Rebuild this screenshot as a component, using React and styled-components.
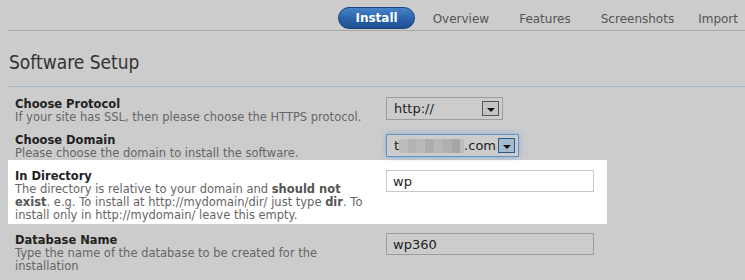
import React from "react";
import styled, {createGlobalStyle} from "styled-components";

const GlobalStyle = createGlobalStyle`
  html, body {
    margin: 0;
    padding: 0;
    background: #cccccc;
    font-family: "DejaVu Sans", Verdana, sans-serif;
  }
`

const Page = styled.div`
  width: 745px;
  height: 280px;
  overflow: hidden;
  padding-left: 8px;
  box-sizing: border-box;
`

const TabBar = styled.div`
  height: 29px;
  display: flex;
  align-items: flex-end;
  justify-content: flex-end;
  gap: 30px;
  padding: 0 7px 1px 0;
  border-bottom: 1px solid #a8a8a8;
`

const Tab = styled.div`
  font-size: 12px;
  line-height: 20px;
  color: #555;
  &:last-child {
    margin-left: -6px;
  }
  ${(p) => p.$active && `
    margin-right: -12px;
    height: 20px;
    padding: 0 16px;
    border-radius: 11px;
    border: 1px solid #1a437c;
    background: linear-gradient(#4683c9, #2a62a9 55%, #1d4f93);
    color: #fff;
    font-weight: bold;
  `}
`

const Title = styled.div`
  font-family: "DejaVu Sans Condensed", "DejaVu Sans", sans-serif;
  font-size: 19px;
  line-height: 22px;
  color: #333;
  padding: 20px 0 13px 1px;
  border-bottom: 1px solid #a9bac6;
`

const Rows = styled.div`
  width: 599px;
  padding-top: 1px;
`

const Row = styled.div`
  display: flex;
  align-items: flex-start;
  padding: 10px 7px ${(p) => (p.$highlight ? "2px" : "0")};
  background: ${(p) => (p.$highlight ? "#ffffff" : "transparent")};
`

const Label = styled.div`
  width: 355px;
  flex-shrink: 0;
  font-size: 11.5px;
  line-height: 13px;
  color: #666;
  b {
    color: #555;
  }
`

const Heading = styled.div`
  font-weight: bold;
  color: #222;
`

const Field = styled.div`
  margin-left: 16px;
  margin-top: ${(p) => p.$top || 0}px;
`

const Select = styled.div`
  width: ${(p) => p.$width}px;
  height: 23px;
  box-sizing: border-box;
  display: flex;
  align-items: center;
  padding: 0 3px 0 7px;
  font-size: 13px;
  color: #222;
  border: 1px solid ${(p) => (p.$focus ? "#5c97cc" : "#9d9d9d")};
  box-shadow: ${(p) => (p.$focus ? "0 0 6px rgba(90,150,215,0.55)" : "none")};
`

const SelectText = styled.div`
  flex: 1;
  display: flex;
  align-items: center;
`

const Arrow = styled.div`
  width: 17px;
  height: 15px;
  box-sizing: border-box;
  border: 1px solid ${(p) => (p.$focus ? "#2d5b89" : "#555")};
  background: ${(p) => (p.$focus ? "#a3bcd2" : "#c4c4c4")};
  display: flex;
  align-items: center;
  justify-content: center;
  &::after {
    content: "";
    border-left: 4px solid transparent;
    border-right: 4px solid transparent;
    border-top: 4px solid #111;
    margin-top: 2px;
  }
`

const Blur = styled.span`
  display: inline-block;
  width: ${(p) => p.$w}px;
  height: 14px;
  background: ${(p) => p.$c};
`

const Input = styled.input`
  width: 208px;
  height: 22px;
  box-sizing: border-box;
  padding: 0 6px;
  font-family: "DejaVu Sans", Verdana, sans-serif;
  font-size: 13px;
  color: #222;
  outline: none;
  border: 1px solid ${(p) => (p.$muted ? "#9d9d9d" : "#c8c8c8")};
  background: ${(p) => (p.$muted ? "#cccccc" : "#ffffff")};
`

const tabs = ["Overview", "Features", "Screenshots", "Import"];

const blurs = [
  ["#bcbcbc", 9], ["#b3b3b3", 8], ["#bababa", 9], ["#adadad", 9],
  ["#b7b7b7", 9], ["#b0b0b0", 9], ["#a6a6a6", 8], ["#bdbdbd", 4],
];

const App = () => {
  return (
    <Page>
      <GlobalStyle/>
      <TabBar>
        <Tab $active>Install</Tab>
        {tabs.map((t) => <Tab key={t}>{t}</Tab>)}
      </TabBar>
      <Title>Software Setup</Title>
      <Rows>
        <Row>
          <Label>
            <Heading>Choose Protocol</Heading>
            If your site has SSL, then please choose the HTTPS protocol.
          </Label>
          <Field $top={-1}>
            <Select $width={117}>
              <SelectText>http://</SelectText>
              <Arrow/>
            </Select>
          </Field>
        </Row>
        <Row>
          <Label>
            <Heading>Choose Domain</Heading>
            Please choose the domain to install the software.
          </Label>
          <Field>
            <Select $width={133} $focus>
              <SelectText>
                <span>t</span>
                {blurs.map(([c, w], i) => <Blur key={i} $c={c} $w={w}/>)}
                <span>.com</span>
              </SelectText>
              <Arrow $focus/>
            </Select>
          </Field>
        </Row>
        <Row $highlight>
          <Label>
            <Heading>In Directory</Heading>
            The directory is relative to your domain and <b>should not exist</b>. e.g. To install at http://mydomain/dir/ just type <b>dir</b>. To install only in http://mydomain/ leave this empty.
          </Label>
          <Field>
            <Input defaultValue="wp"/>
          </Field>
        </Row>
        <Row>
          <Label>
            <Heading>Database Name</Heading>
            Type the name of the database to be created for the installation
          </Label>
          <Field $top={-1}>
            <Input $muted defaultValue="wp360"/>
          </Field>
        </Row>
      </Rows>
    </Page>
  );
};

export default App;
